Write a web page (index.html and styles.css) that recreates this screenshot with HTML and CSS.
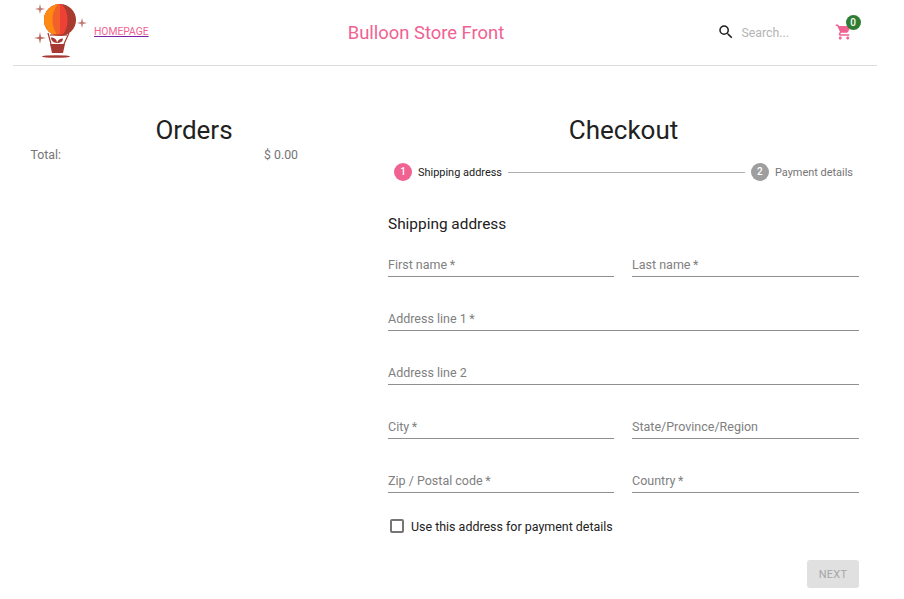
FILE: index.html
```html
<!DOCTYPE html>
<html lang="en">
<head>
<meta charset="utf-8">
<title>Bulloon Store Front</title>
<link rel="stylesheet" href="styles.css">
</head>
<body>
<header class="topbar">
  <div class="brand">
    <svg class="logo" width="47" height="58" viewBox="0 0 47 58" aria-hidden="true">
      <defs><clipPath id="env"><circle cx="25" cy="18" r="16"/></clipPath></defs>
      <g clip-path="url(#env)">
        <rect x="8" y="1" width="34" height="34" fill="#a93a30"/>
        <path d="M25 1 C35 7 35 29 25 35 H5 V1Z" fill="#ef4034"/>
        <path d="M25 1 V35 H5 V1Z" fill="#f2602b"/>
        <path d="M25 1 C15 7 15 29 25 35 H5 V1Z" fill="#fd8a12"/>
      </g>
      <path d="M13 31 L16 42 M34 31 L29 42" stroke="#a63a33" stroke-width="1.200" fill="none"/>
      <path d="M15 33 H32" stroke="#a63a33" stroke-width="1.200"/>
      <path d="M22 41 C18 41 16 38 16 35.500 C20 35.500 22 38 22 41 C22.500 38.500 24.500 36.500 28 36.500 C28 39.500 25.500 41 22 41Z" fill="#a63a33"/>
      <path d="M15 42 H30 L28 51 H17 Z" fill="#a63a33"/>
      <ellipse cx="21" cy="54.500" rx="14" ry="1.300" fill="#a63a33"/>
      <path d="M5 2 L6 6 L10 7 L6 8 L5 12 L4 8 L0 7 L4 6Z" fill="#c07a73"/>
      <path d="M47 16 L48 20 L52 21 L48 22 L47 26 L46 22 L42 21 L46 20Z" fill="#c07a73"/>
      <path d="M5 30 L6 35 L11 36 L6 37 L5 42 L4 37 L-1 36 L4 35Z" fill="#b8645c"/>
    </svg>
    <a class="home" href="#">HOMEPAGE</a>
  </div>
  <h1 class="store">Bulloon Store Front</h1>
  <div class="tools">
    <svg class="search-icon" width="18" height="18" viewBox="0 0 24 24" aria-hidden="true"><path fill="#212121" d="M15.500 14h-.79l-.28-.27A6.470 6.470 0 0 0 16 9.500 6.500 6.500 0 1 0 9.500 16c1.610 0 3.090-.59 4.230-1.570l.27.28v.79l5 4.990L20.490 19l-4.990-5zm-6 0C7.010 14 5 11.990 5 9.500S7.010 5 9.500 5 14 7.010 14 9.500 11.990 14 9.500 14z"/></svg>
    <span class="search-text">Search...</span>
    <span class="cart">
      <svg width="18" height="18" viewBox="0 0 24 24" aria-hidden="true"><path fill="#f06292" d="M7 18c-1.100 0-1.990.9-1.990 2S5.900 22 7 22s2-.9 2-2-.9-2-2-2zM1 2v2h2l3.600 7.590-1.350 2.450c-.16.280-.25.610-.25.960 0 1.100.9 2 2 2h12v-2H7.420c-.14 0-.25-.11-.25-.25l.03-.12.9-1.630h7.450c.75 0 1.410-.41 1.750-1.030l3.580-6.490A1 1 0 0 0 20 4H5.210l-.94-2H1zm16 16c-1.100 0-1.990.9-1.990 2s.89 2 1.990 2 2-.9 2-2-.9-2-2-2z"/></svg>
      <span class="badge">0</span>
    </span>
  </div>
</header>
<main class="page">
  <section class="orders">
    <h2 class="title">Orders</h2>
    <div class="total"><span>Total:</span><span>$ 0.00</span></div>
  </section>
  <section class="checkout">
    <h2 class="title">Checkout</h2>
    <div class="stepper">
      <span class="dot active">1</span>
      <span class="step-label current">Shipping address</span>
      <span class="connector"></span>
      <span class="dot">2</span>
      <span class="step-label">Payment details</span>
    </div>
    <h3 class="subtitle">Shipping address</h3>
    <form class="form">
      <div class="field">First name&thinsp;*</div>
      <div class="field">Last name&thinsp;*</div>
      <div class="field wide">Address line 1&thinsp;*</div>
      <div class="field wide">Address line 2</div>
      <div class="field">City&thinsp;*</div>
      <div class="field">State/Province/Region</div>
      <div class="field">Zip / Postal code&thinsp;*</div>
      <div class="field">Country&thinsp;*</div>
    </form>
    <label class="check"><span class="box"></span>Use this address for payment details</label>
    <div class="actions"><span class="next">NEXT</span></div>
  </section>
</main>
</body>
</html>
```
FILE: styles.css
```css
* { box-sizing: border-box; }
html, body { margin: 0; height: 599px; overflow: hidden; background: #fff; }
body { font-family: Roboto, sans-serif; color: #212121; }

.topbar {
  width: 864px;
  height: 66px;
  margin-left: 13px;
  border-bottom: 1px solid #ddd;
  display: flex;
  align-items: flex-start;
}
.brand { width: 231px; display: flex; align-items: flex-start; padding: 2px 0 0 22px; }
.logo { flex: none; overflow: visible; }
.home { margin: 23px 0 0 12px; font-size: 10.3px; line-height: 13px; color: #f06292; text-decoration-color: #7b1fa2; }
.store { width: 364px; margin: 22px 0 0; text-align: center; font-size: 18.4px; line-height: 22px; font-weight: 400; color: #f06292; }
.tools { flex: 1; display: flex; align-items: flex-start; padding: 23px 0 0 109px; }
.search-icon { flex: none; }
.search-text { margin: 3px 0 0 6.500px; width: 94px; font-size: 12.3px; line-height: 15px; color: #b4b4b4; }
.cart { position: relative; display: block; height: 18px; margin-left: -1px; }
.cart svg { display: block; }
.badge {
  position: absolute; left: 11px; top: -8px;
  width: 15px; height: 15px; border-radius: 50%;
  background: #2e7d32; color: #fff;
  font-size: 10px; font-weight: 500; line-height: 15px; text-align: center;
}

.page { display: flex; padding: 49px 45px 0 30px; }
.orders { width: 328px; margin-right: 30px; }
.checkout { width: 471px; }
.title { margin: 0; font-size: 26px; line-height: 30px; font-weight: 400; text-align: center; }
.total { width: 268px; display: flex; justify-content: space-between; margin-top: 1px; padding-left: 0.500px; font-size: 12.300px; line-height: 19px; color: #757575; }

.stepper { display: flex; align-items: center; height: 18px; margin: 18px 6px 0; }
.dot {
  flex: none; width: 18px; height: 18px; border-radius: 50%;
  background: #9e9e9e; color: #fff;
  font-size: 10px; font-weight: 500; line-height: 18px; text-align: center;
}
.dot.active { background: #f06292; }
.step-label { margin-left: 6px; font-size: 10.950px; color: #757575; white-space: nowrap; }
.step-label.current { color: #212121; }
.connector { flex: 1; height: 1px; margin: 0 6px; background: #b0b0b0; }

.subtitle { margin: 33px 0 0; font-size: 15.400px; line-height: 20px; font-weight: 400; }
.form { display: grid; grid-template-columns: 226px 227px; column-gap: 18px; row-gap: 22px; margin-top: 11px; }
.field { height: 32px; padding-top: 12px; border-bottom: 1px solid #8f8f8f; font-size: 12.500px; line-height: 16px; color: #808080; }
.wide { grid-column: 1 / -1; }

.check { display: flex; align-items: center; height: 20px; margin-top: 23px; font-size: 12.450px; color: #212121; }
.box { flex: none; width: 14px; height: 14px; margin: 0 7px 0 2px; border: 2px solid #757575; border-radius: 2px; }

.actions { display: flex; justify-content: flex-end; margin-top: 24px; }
.next {
  width: 52px; height: 28px; border-radius: 3px;
  background: #e0e0e0; color: #a6a6a6;
  font-size: 11px; line-height: 29px; text-align: center; letter-spacing: .2px;
}
```
